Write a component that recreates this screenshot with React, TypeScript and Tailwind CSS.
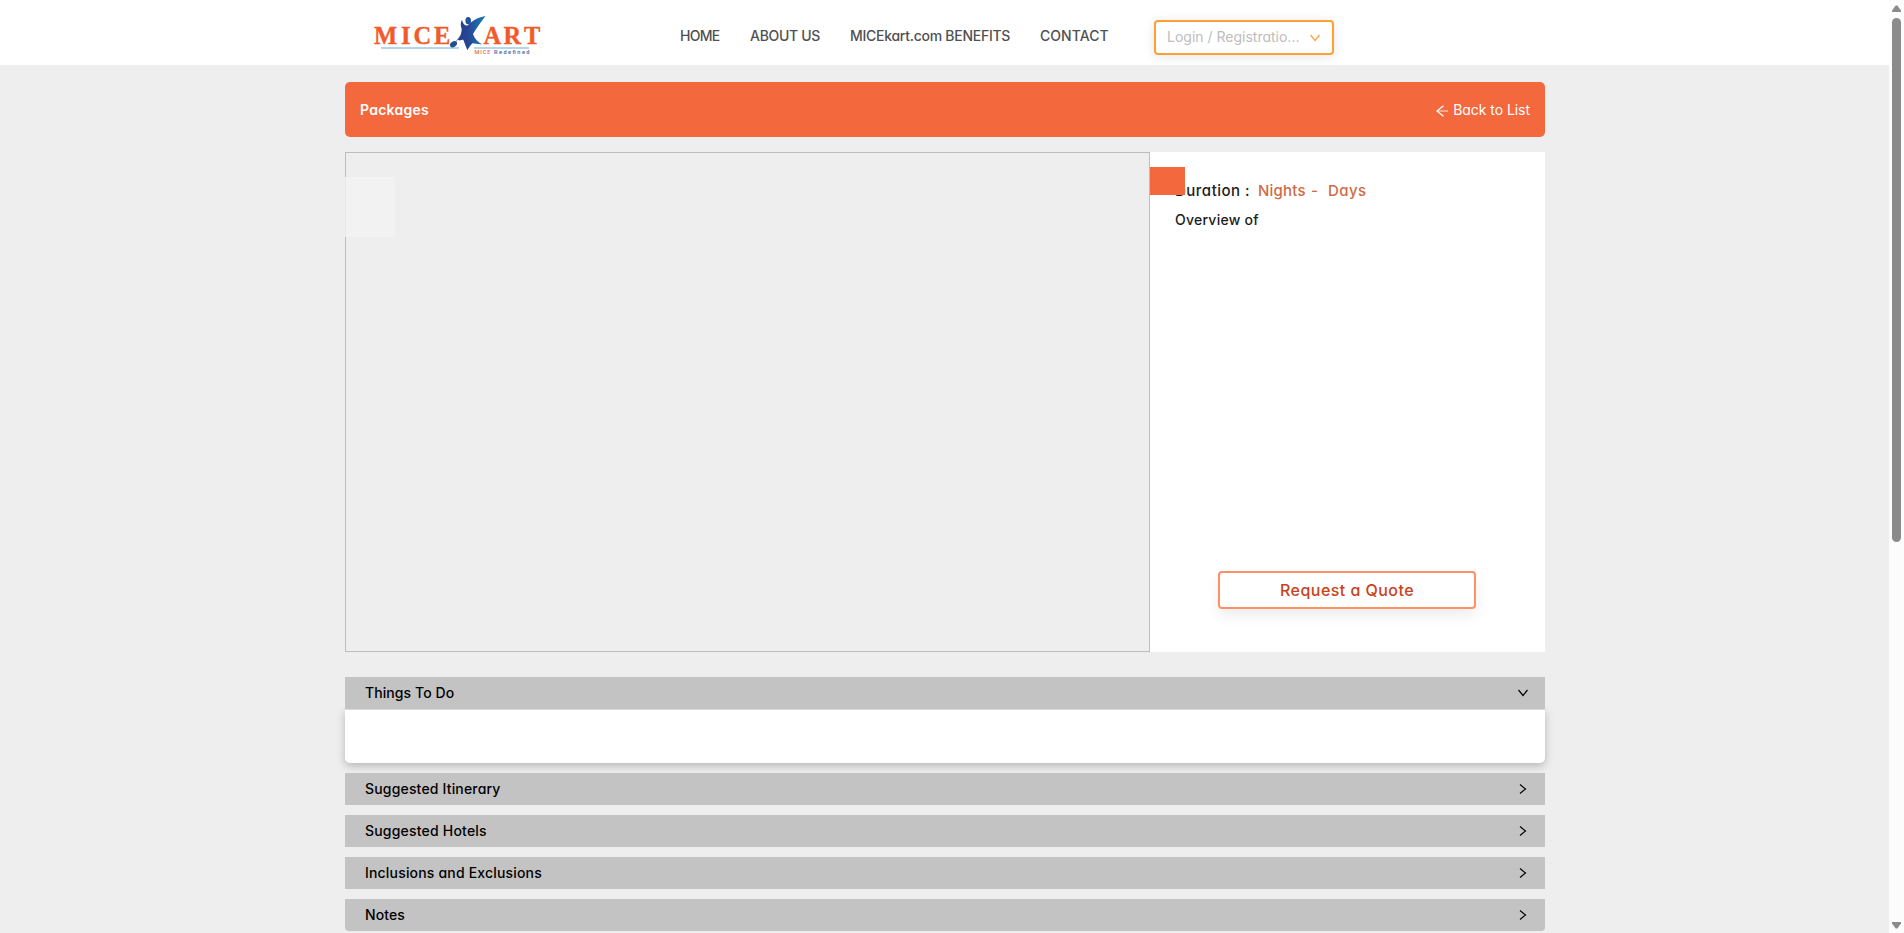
type Section = { title: string; tracking: string; open?: boolean };

const sections: Section[] = [
  { title: "Things To Do", tracking: "tracking-[0.08px]", open: true },
  { title: "Suggested Itinerary", tracking: "tracking-[0.17px]" },
  { title: "Suggested Hotels", tracking: "tracking-[0.2px]" },
  { title: "Inclusions and Exclusions", tracking: "tracking-[0.18px]" },
  { title: "Notes", tracking: "tracking-[0.1px]" },
];

function Logo() {
  return (
    <svg width="180" height="46" viewBox="370 12 180 46" className="shrink-0">
      <defs>
        <linearGradient id="figure" x1="0" x2="1" y1="0" y2="0">
          <stop offset="0" stopColor="#263c8b" />
          <stop offset="0.4" stopColor="#274797" />
          <stop offset="1" stopColor="#1b80b5" />
        </linearGradient>
      </defs>
      <path d="M381 48h78M474 48h55" stroke="#b5d5ea" strokeWidth="1.8" />
      <g fill="#f15a2b" stroke="#f15a2b" strokeWidth="0.35" fontFamily="'Liberation Serif', serif" fontWeight="700" fontSize="24.5">
        <text y="44" x="374 401 413.5 434">MICE</text>
        <text y="44" x="483.5 503.5 524">ART</text>
      </g>
      <path
        d="M485.500 16C477 17.500 471.500 21.500 467.500 25.500C465 26 463.200 24 462 20C460.300 22 460.500 26 461.700 29C461.500 33 460.500 36.500 457.500 39.500L459.500 40.500C461 39.800 462.200 39.500 463.300 39.800L467.300 50.300C469 47.500 470.500 45 472.500 43.200L482.500 44.500C477.500 42 474.500 38.500 473 34C476.500 28 481 22 485.500 16Z"
        fill="url(#figure)"
      />
      <ellipse cx="468.200" cy="20.700" rx="2.800" ry="3.600" fill="#26519c" />
      <path d="M460 36l-5 7" stroke="#7897c5" strokeWidth="1" />
      <ellipse cx="453.500" cy="44.200" rx="3.800" ry="2.700" transform="rotate(-35 453.500 44.200)" fill="#204f91" />
      <g fontFamily="Roboto, sans-serif" fontSize="5.600" fontWeight="500">
        <text x="474.500" y="53.500" textLength="16" fill="#ee6a48">MICE</text>
        <text x="494" y="53.500" textLength="35.500" fill="#435da0">Redefined</text>
      </g>
    </svg>
  );
}

function Chevron({ className, width = 1.2 }: { className: string; width?: number }) {
  return (
    <svg viewBox="0 0 10 8" className={className} fill="none" stroke="currentColor" strokeWidth={width}>
      <path d="M0.500 1L5 6.500L9.500 1" />
    </svg>
  );
}

function Header() {
  return (
    <header className="flex h-[65px] bg-white pl-[370px]">
      <div className="w-[310px] pt-3">
        <Logo />
      </div>
      <nav className="flex h-[71px] w-[474px] shrink-0 items-center text-[14px] font-medium text-[#505050]">
        <a className="w-[70px] tracking-[-0.7px]">HOME</a>
        <a className="w-[100px] tracking-[-0.3px]">ABOUT US</a>
        <a className="w-[190px] tracking-[-0.27px]">MICEkart.com BENEFITS</a>
        <a className="tracking-[0.05px]">CONTACT</a>
      </nav>
      <button className="mt-5 flex h-[35px] w-[180px] items-center justify-between rounded-[4px] border-2 border-[#ffa033] pr-[12px] pl-[11px] text-[14px] text-[#bdbdbd] shadow-[0_2px_12px_rgba(0,0,0,0.1)]">
        <span className="pb-0.5">Login / Registratio...</span>
        <Chevron className="h-2 w-2.5 text-[#ffa33a]" width={1.3} />
      </button>
    </header>
  );
}

function Scrollbar() {
  return (
    <aside className="flex h-[933px] w-[15px] flex-col items-center bg-[#fcfcfc] text-[#8b8b8b]">
      <svg viewBox="0 0 9 7" className="mt-[5px] h-[7px] w-[9px]" fill="currentColor">
        <path d="M3.700 0.500h1.600L9 5.500V7H0V5.500z" />
      </svg>
      <div className="mt-1.5 h-[524px] w-[9px] rounded-full bg-[#8b8b8b]" />
      <svg viewBox="0 0 9 7" className="mt-auto mb-1 h-[7px] w-[9px]" fill="currentColor">
        <path d="M3.700 6.500h1.600L9 1.500V0H0v1.500z" />
      </svg>
    </aside>
  );
}

export default function App() {
  return (
    <div className="flex h-[933px] w-[1904px] overflow-hidden bg-[#eeeeee] font-['Inter',sans-serif] [font-feature-settings:'cv11']">
      <div className="w-[1889px]">
        <Header />
        <main className="ml-[345px] w-[1200px] pt-[17px]">
          <div className="flex h-[55px] items-center justify-between rounded-[5px] bg-[#f3683c] pr-[15px] pb-px pl-[15px] text-[14px] text-white">
            <h1 className="font-semibold tracking-[0.25px]">Packages</h1>
            <a className="flex items-center gap-[5px] tracking-[-0.05px]">
              <svg viewBox="0 0 12 12" className="mt-1 size-3" fill="none" stroke="white" strokeWidth="1.200">
                <path d="M7.500 0.800L1 6L7.500 11.200" />
                <path d="M1 6H12" strokeOpacity="0.7" />
              </svg>
              Back to List
            </a>
          </div>

          <div className="mt-[15px] flex h-[500px]">
            <div className="relative w-[805px] border border-[#bdbdbd]">
              <div className="absolute top-6 -left-px h-[60px] w-[50px] bg-[#f2f2f2]/80" />
            </div>
            <div className="relative flex flex-1 flex-col bg-white px-[25px] pt-[26px]">
              <div className="absolute top-[15px] left-0 h-7 w-[35px] bg-[#f3683c]" />
              <p className="h-[25px] text-[15px] leading-[25px] font-medium whitespace-pre text-[#1c1c1c]">
                <span className="inline-block w-[83px] tracking-[0.5px]">Duration :</span>
                <span className="inline-block w-[53px] tracking-[0.2px] text-[#cf6a46]">Nights</span>
                <span className="inline-block w-[17px] text-[#cf6a46]">-</span>
                <span className="tracking-[0.39px] text-[#cf6a46]">Days</span>
              </p>
              <p className="mt-1 h-[26px] text-[14px] leading-[26px] font-medium tracking-[0.25px] text-[#1c1c1c]">
                Overview of
              </p>
              <button className="mt-auto mb-[43px] ml-[43px] h-[38px] w-[258px] rounded-[4px] border-2 border-[#ff9068] pb-px text-[16px] font-medium tracking-[0.45px] text-[#c8431a] shadow-[0_7px_14px_rgba(0,0,0,0.07)]">
                Request a Quote
              </button>
            </div>
          </div>

          <div className="mt-[25px] flex flex-col gap-2.5">
            {sections.map(({ title, tracking, open }) => (
              <section key={title} className="last:overflow-hidden last:rounded-b-[4px]">
                <div className="relative flex h-8 items-center justify-between bg-[#c3c3c3] pr-[17px] pl-5 text-[14px] font-medium text-black">
                  <h2 className={`pb-0.5 ${tracking}`}>{title}</h2>
                  <Chevron className={open ? "h-2 w-2.5" : "h-2 w-2.5 -rotate-90"} />
                </div>
                {open && (
                  <div className="h-[54px] rounded-b-[5px] border-t border-[#d9d9d9] bg-white shadow-[0_3px_8px_rgba(0,0,0,0.24)]" />
                )}
              </section>
            ))}
          </div>
        </main>
      </div>
      <Scrollbar />
    </div>
  );
}
